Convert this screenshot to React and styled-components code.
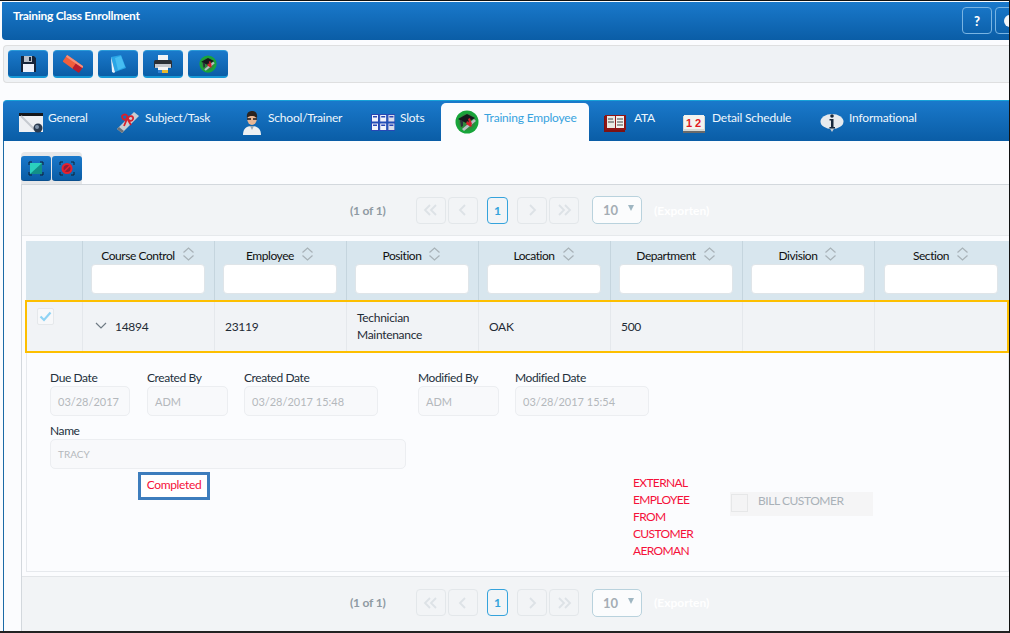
import React from "react";
import styled, { createGlobalStyle } from "styled-components";

const GlobalStyle = createGlobalStyle`
  html, body { margin: 0; padding: 0; background: #fff; }
  * { box-sizing: border-box; }
  body { font-family: Lato, "Liberation Sans", sans-serif; font-size: 12px; color: #222; }
`;

const BLUE = "linear-gradient(#1a79cb, #0a5da6)";

// -------- Page frame --------

const Frame = styled.div`
  width: 1010px;
  height: 633px;
  overflow: hidden;
  padding-top: 1px;
  background: #fbfcfe;
  border-top: 1px solid #111;
  border-right: 1px solid #111;
  border-bottom: 2px solid #222;
  display: flex;
  flex-direction: column;
`;

const Header = styled.div`
  height: 38px;
  flex: none;
  margin-left: 2px;
  padding: 5px 0 0 11px;
  background: ${BLUE};
  border-radius: 0 0 0 4px;
  display: flex;
  justify-content: space-between;
  color: #fff;
`;

const Title = styled.div`
  font-size: 12px;
  font-weight: 700;
  letter-spacing: -0.3px;
  line-height: 18px;
`;

const HeaderTools = styled.div`
  display: flex;
  gap: 3px;
  margin-right: -16px;
`;

const HeaderButton = styled.div`
  width: 30px;
  height: 27px;
  border: 1px solid #79b4e2;
  border-radius: 4px;
  font-size: 13px;
  font-weight: 900;
  display: flex;
  align-items: center;
  justify-content: center;
`;

const HeaderDot = styled.i`
  width: 12px;
  height: 12px;
  border-radius: 50%;
  background: #f4f6f8;
`;

const Toolbar = styled.div`
  height: 38px;
  flex: none;
  margin: 5px 0 0 3px;
  padding: 4px 4px;
  display: flex;
  gap: 5px;
  background: #eff2f5;
  border: 1px solid #dedfe0;
  border-right: none;
  border-radius: 4px 0 0 4px;
`;

const ToolButton = styled.div`
  width: 40px;
  height: 28px;
  background: ${BLUE};
  border-top: 1px solid #2b9bd8;
  border-bottom: 2px solid #1798d6;
  border-radius: 4px;
  display: flex;
  align-items: center;
  justify-content: center;
`;

// -------- Tabs --------

const TabBar = styled.div`
  height: 41px;
  flex: none;
  margin: 17px 0 0 3px;
  background: ${BLUE};
  border-top: 1px solid #17a2d8;
  border-radius: 4px 0 0 0;
  display: flex;
`;

const Tab = styled.div`
  width: ${(p) => p.$width}px;
  height: ${(p) => (p.$active ? 38 : 40)}px;
  margin-top: ${(p) => (p.$active ? 2 : 0)}px;
  padding-left: ${(p) => p.$pad}px;
  display: flex;
  gap: ${(p) => p.$gap}px;
  font-size: 12px;
  letter-spacing: -0.2px;
  color: ${(p) => (p.$active ? "#37a3de" : "#eef6fc")};
  background: ${(p) => (p.$active ? "#fbfcfe" : "transparent")};
  border-radius: ${(p) => (p.$active ? "5px 5px 0 0" : 0)};

  svg { align-self: center; margin-top: ${(p) => (p.$active ? 0 : 3)}px; flex: none; }
  span { margin-top: ${(p) => (p.$active ? 4 : 6)}px; line-height: 22px; white-space: nowrap; }
`;

const TabBody = styled.div`
  flex: 1;
  min-height: 0;
  margin-left: 3px;
  padding: 11px 0 0 17px;
  border-left: 1px solid #1b6aa6;
  display: flex;
  flex-direction: column;
`;

const ActionGroup = styled.div`
  align-self: flex-start;
  height: 32px;
  padding: 4px 0 3px;
  display: flex;
  gap: 1px;
  background: #e6e7e9;
  border-radius: 4px 4px 0 0;
`;

const ActionButton = styled.div`
  width: 30px;
  height: 25px;
  background: ${BLUE};
  border-bottom: 1px solid #0a4f8e;
  border-radius: 3px;
  display: flex;
  align-items: center;
  justify-content: center;
`;

const Panel = styled.div`
  flex: 1;
  min-height: 0;
  display: flex;
  flex-direction: column;
  border-top: 1px solid #d3d8dd;
  border-left: 1px solid #d3d8dd;
`;

// -------- Paginator --------

const Pager = styled.div`
  height: ${(p) => p.$height}px;
  flex: none;
  margin-top: ${(p) => p.$top}px;
  padding: 0 0 ${(p) => (p.$top ? 3 : 0)}px 328px;
  background: #f2f4f6;
  border-top: ${(p) => (p.$top ? "1px solid #e2e5e8" : "none")};
  border-bottom: ${(p) => (p.$top ? "none" : "1px solid #e6e9ec")};
  display: flex;
  align-items: center;
`;

const PageCount = styled.div`
  width: 66px;
  color: #8f9aa3;
  font-weight: 700;
  font-size: 12px;
  letter-spacing: -0.2px;
`;

const PageArrow = styled.div`
  width: 30px;
  height: 27px;
  margin-right: ${(p) => p.$right}px;
  border: 1px solid #e3e7ea;
  border-radius: 4px;
  display: flex;
  align-items: center;
  justify-content: center;
`;

const PageNumber = styled.div`
  width: 21px;
  height: 27px;
  margin: 0 9px;
  border: 1px solid #35a3dc;
  border-radius: 4px;
  color: #35a3dc;
  font-weight: 700;
  display: flex;
  align-items: center;
  justify-content: center;
`;

const PageSize = styled.div`
  width: 50px;
  height: 28px;
  margin-left: 11px;
  padding: 0 7px 0 10px;
  background: #fbfcfd;
  border: 1px solid #b9d2dd;
  border-radius: 5px;
  color: #a4adb4;
  font-weight: 700;
  font-size: 13px;
  display: flex;
  align-items: center;
  justify-content: space-between;
`;

const SizeCaret = styled.i`
  margin-bottom: 4px;
  border-left: 3px solid transparent;
  border-right: 3px solid transparent;
  border-top: 6px solid #9fb6c2;
`;

const Exporter = styled.div`
  margin-left: 12px;
  color: #fff;
  font-weight: 700;
  font-size: 12px;
`;

// -------- Table --------

const TableHead = styled.div`
  height: 59px;
  flex: none;
  margin: 5px 0 0 4px;
  display: grid;
  grid-template-columns: 56px repeat(6, 132px) 134px;
  background: #d8e6ee;
`;

const HeadCell = styled.div`
  padding: 6px 9px 0 8px;
  border-left: ${(p) => (p.$first ? "none" : "1px solid #c5d5de")};
  display: flex;
  flex-direction: column;
  align-items: center;
`;

const HeadLabel = styled.div`
  height: 17px;
  display: flex;
  align-items: center;
  gap: 7px;
  color: #111;
  font-size: 12px;
  letter-spacing: -0.45px;

  svg { margin-top: -3px; }
`;

const FilterInput = styled.div`
  width: 114px;
  height: 30px;
  background: #fff;
  border: 1px solid #dfe5e9;
  border-radius: 4px;
`;

const Row = styled.div`
  height: 53px;
  flex: none;
  margin-left: 3px;
  display: grid;
  grid-template-columns: 55px repeat(6, 132px) 132px;
  background: #f1f3f6;
  border: 2px solid #fdbf00;
  font-size: 12px;
  letter-spacing: -0.3px;
  color: #1f2a35;
`;

const Cell = styled.div`
  padding: 0 ${(p) => (p.$pad ? 0 : 8)}px 1px ${(p) => p.$pad || 10}px;
  border-left: ${(p) => (p.$first ? "none" : "1px solid #e5e8ec")};
  display: flex;
  align-items: center;
  gap: 8px;
  line-height: 17px;
`;

const CheckCell = styled.div`
  padding: 6px 0 0 10px;
`;

const CheckBox = styled.div`
  width: 17px;
  height: 17px;
  background: #f7f8fa;
  border: 1px solid #e5e8eb;
  border-radius: 2px;
  display: flex;
  align-items: center;
  justify-content: center;
`;

// -------- Detail form --------

const Detail = styled.div`
  height: 219px;
  flex: none;
  margin-left: 4px;
  padding: 17px 0 0 23px;
  border: 1px solid #e6e9ed;
  border-top: none;
`;

const FieldRow = styled.div`
  display: flex;
  margin-top: ${(p) => p.$top || 0}px;
`;

const Field = styled.div`
  width: ${(p) => p.$width}px;
  margin-right: ${(p) => p.$right || 0}px;
`;

const FieldLabel = styled.div`
  height: 16px;
  line-height: 15px;
  font-size: 12px;
  letter-spacing: -0.4px;
  color: #23303c;
  white-space: nowrap;
`;

const FieldValue = styled.div`
  height: 30px;
  padding-left: 7px;
  background: #f8f9fb;
  border: 1px solid #eceef1;
  border-radius: 5px;
  color: #b4b8bc;
  font-size: ${(p) => (p.$small ? 10 : 11)}px;
  display: flex;
  align-items: center;
  white-space: nowrap;
`;

const StatusRow = styled.div`
  display: flex;
  align-items: flex-start;
  margin-top: 3px;
`;

const Completed = styled.div`
  width: 72px;
  height: 28px;
  margin-left: 88px;
  padding-bottom: 4px;
  border: 3px solid #3d7dbd;
  background: #fff;
  color: #f5103a;
  font-size: 12px;
  letter-spacing: -0.35px;
  display: flex;
  align-items: center;
  justify-content: center;
`;

const ExternalNote = styled.div`
  width: 70px;
  margin: 2px 0 0 423px;
  color: #f5103a;
  font-size: 12px;
  letter-spacing: -0.65px;
  line-height: 17px;
`;

const BillCustomer = styled.div`
  width: 143px;
  height: 24px;
  margin: 20px 0 0 27px;
  padding: 1px 0 0 1px;
  background: #f5f5f6;
  display: flex;
  gap: 10px;
  color: #a9b1b8;
  font-size: 12px;
  letter-spacing: -0.45px;
`;

const BillBox = styled.div`
  width: 17px;
  height: 18px;
  margin-top: 1px;
  background: #f4f4f5;
  border: 1px solid #e6e7e8;
`;

// -------- Icons --------

const Floppy = () => (
  <svg width="17" height="18" viewBox="0 0 17 18">
    <path d="M1 1h13l2 2v14H1z" fill="#16243a" />
    <rect x="4" y="1" width="8" height="6" fill="#b9bfc9" />
    <rect x="9" y="2" width="2" height="4" fill="#16243a" />
    <path d="M3 9h11v8H3z" fill="#eef1fa" />
  </svg>
);

const Eraser = () => (
  <svg width="20" height="20" viewBox="0 0 20 20">
    <g transform="rotate(35 10 10)">
      <rect x="0" y="6" width="13" height="8" rx="1" fill="#ef5f3c" />
      <rect x="12" y="6" width="8" height="8" rx="1" fill="#b81d2c" />
      <rect x="0" y="6" width="20" height="2" fill="#f68f78" />
    </g>
  </svg>
);

const Notepad = () => (
  <svg width="18" height="20" viewBox="0 0 18 20">
    <path d="M2 3l10-2 5 13-11 4z" fill="#2aa5e6" />
    <path d="M2 3l4 15-1 1-2-1z" fill="#e9f3fb" />
    <path d="M6 4l6-2 4 11-7 3z" fill="#46bdf2" />
  </svg>
);

const Printer = () => (
  <svg width="20" height="20" viewBox="0 0 20 20">
    <rect x="5" y="1" width="10" height="6" fill="#f2f3f5" />
    <rect x="1" y="6" width="18" height="8" rx="1.5" fill="#2a2f36" />
    <rect x="2" y="10" width="16" height="4" fill="#c4c8ce" />
    <rect x="5" y="13" width="10" height="6" fill="#f5f5f5" />
    <rect x="9" y="16" width="6" height="3" fill="#e8b92e" />
    <rect x="5" y="16" width="4" height="3" fill="#2f7fd0" />
  </svg>
);

const TrainingBadge = ({ size = 18 }) => (
  <svg width={size} height={size} viewBox="0 0 24 24">
    <circle cx="12" cy="12" r="11.5" fill="#18a53a" />
    <circle cx="12" cy="12" r="8.5" fill="#2f8a3d" />
    <path d="M3 9l9-5 8 4-9 5z" fill="#15181c" />
    <path d="M5 10l1 7 2-1V11z" fill="#2a2f3a" />
    <path d="M7 19L19 9l2 2L9 21z" fill="#b9bfc4" />
    <path d="M12 11l5 4-1 2-5-3zM15 8l2 6-2 1-2-6z" fill="#d2202c" />
  </svg>
);

const TealSquare = () => (
  <svg width="16" height="15" viewBox="0 0 16 15">
    <rect x="2" y="2" width="12" height="11" fill="#128f88" />
    <path d="M2 2h12L2 13z" fill="#2bd0be" />
    <path d="M1 4V1h3M12 1h3v3M15 11v3h-3M4 14H1v-3" fill="none" stroke="#123" strokeWidth="1" />
  </svg>
);

const NoSign = () => (
  <svg width="16" height="15" viewBox="0 0 16 15">
    <path d="M1 4V1h3M12 1h3v3M15 11v3h-3M4 14H1v-3" fill="none" stroke="#123" strokeWidth="1" />
    <circle cx="8" cy="7.5" r="4.5" fill="#8c1d3a" stroke="#e8202c" strokeWidth="2" />
    <path d="M5 10.5l6-6" stroke="#e8202c" strokeWidth="1.6" />
  </svg>
);

const GeneralIcon = () => (
  <svg width="26" height="22" viewBox="0 0 26 22">
    <rect x="1" y="1" width="24" height="19" fill="#eef0f3" />
    <rect x="1" y="1" width="24" height="3" fill="#15171a" />
    <path d="M3 4l14 14" stroke="#c6cad0" strokeWidth="2" />
    <circle cx="20" cy="16" r="4.5" fill="#2a3a4e" />
    <circle cx="19" cy="15" r="2" fill="#7f93aa" />
  </svg>
);

const DiplomaIcon = () => (
  <svg width="26" height="25" viewBox="0 0 26 25">
    <path d="M2 19L19 2l5 4L7 23z" fill="#c9cdd1" />
    <path d="M2 19l5 4 2-2-5-4z" fill="#6d7278" />
    <path d="M7 6c3-3 6-1 5 2s-5 2-5-2zM13 8c2-3 6-2 5 1s-5 2-5-1zM12 9l-3 7M13 10l3 5" fill="none" stroke="#d8202c" strokeWidth="1.8" />
  </svg>
);

const TeacherIcon = () => (
  <svg width="20" height="24" viewBox="0 0 20 24">
    <path d="M1 24c0-6 3-9 9-9s9 3 9 9z" fill="#eef0f2" />
    <path d="M8 15l2 4 2-4z" fill="#9ba6b0" />
    <ellipse cx="10" cy="8" rx="4.8" ry="6" fill="#e8b795" />
    <path d="M5 7c-1-6 3-7 5-7s6 1 5 7c-2-2-7-3-10 0z" fill="#2b2420" />
    <path d="M5 8h4M11 8h4" stroke="#15181c" strokeWidth="1.5" />
  </svg>
);

const SlotsIcon = () => (
  <svg width="24" height="17" viewBox="0 0 24 17">
    {[0, 1].map((r) =>
      [0, 1, 2].map((c) => (
        <g key={`${r}${c}`}>
          <rect x={c * 8.2 + 0.5} y={r * 8.5 + 0.5} width="7" height="7.5" fill={c === 2 ? "#d9dde8" : "#f0f3fa"} stroke="#2747b5" />
          <rect x={c * 8.2 + 2} y={r * 8.5 + 2} width="4" height="1.5" fill="#2747b5" />
        </g>
      ))
    )}
  </svg>
);

const BookIcon = () => (
  <svg width="23" height="18" viewBox="0 0 23 18">
    <path d="M0 2h2v14h19v2H0z" fill="#7d1212" />
    <rect x="1" y="1" width="21" height="15" fill="#8f1616" />
    <rect x="3" y="2" width="8" height="12" fill="#e9e9e3" />
    <rect x="12" y="2" width="8" height="12" fill="#f2f2ee" />
    <path d="M4 5h5M4 8h6M13 5h6M13 8h6M13 11h6" stroke="#444" />
  </svg>
);

const ScheduleIcon = () => (
  <svg width="24" height="20" viewBox="0 0 24 20">
    <rect x="1" y="3" width="22" height="15" fill="#d9d9d3" />
    <rect x="2" y="2" width="20" height="14" fill="#f3f3ef" />
    <path d="M1 18h22v2H1z" fill="#6a6a6a" />
    <text x="4" y="13.5" fontFamily="Liberation Sans, sans-serif" fontWeight="700" fontSize="11" fill="#e01a20">1</text>
    <text x="13" y="13.5" fontFamily="Liberation Sans, sans-serif" fontWeight="700" fontSize="11" fill="#e01a20">2</text>
  </svg>
);

const InfoIcon = () => (
  <svg width="24" height="19" viewBox="0 0 24 19">
    <ellipse cx="12" cy="8.5" rx="11.5" ry="7.5" fill="#e6eaee" />
    <path d="M9 14l3 5 3-5z" fill="#c5ccd3" />
    <circle cx="12" cy="3" r="1.8" fill="#17283c" />
    <path d="M9.5 6h4v8h1.5v1.5H9.5V14H11V7.5H9.5z" fill="#17283c" />
  </svg>
);

const SortIcon = () => (
  <svg width="13" height="14" viewBox="0 0 13 14">
    <path d="M1.5 5.5l5-4.5 5 4.5M1.5 8.5l5 4.5 5-4.5" fill="none" stroke="#a8b2b8" strokeWidth="1.2" />
  </svg>
);

const Arrow = ({ d }) => (
  <svg width="18" height="14" viewBox="0 0 18 14">
    <path d={d} fill="none" stroke="#dde2e6" strokeWidth="1.8" />
  </svg>
);

const Expand = () => (
  <svg width="12" height="8" viewBox="0 0 12 8">
    <path d="M1 1l5 5 5-5" fill="none" stroke="#6f7a84" strokeWidth="1.2" />
  </svg>
);

const Check = () => (
  <svg width="13" height="11" viewBox="0 0 13 11">
    <path d="M1.5 5.5l3.5 3.5 6.5-7.5" fill="none" stroke="#8fd3f4" strokeWidth="2.2" />
  </svg>
);

// -------- Data --------

const tabs = [
  { label: "General", icon: <GeneralIcon />, width: 97, pad: 15, gap: 4 },
  { label: "Subject/Task", icon: <DiplomaIcon />, width: 127, pad: 15, gap: 4 },
  { label: "School/Trainer", icon: <TeacherIcon />, width: 129, pad: 15, gap: 6 },
  { label: "Slots", icon: <SlotsIcon />, width: 85, pad: 15, gap: 5 },
  { label: "Training Employee", icon: <TrainingBadge size={24} />, width: 148, pad: 14, gap: 5, active: true },
  { label: "ATA", icon: <BookIcon />, width: 78, pad: 15, gap: 7 },
  { label: "Detail Schedule", icon: <ScheduleIcon />, width: 138, pad: 15, gap: 6 },
  { label: "Informational", icon: <InfoIcon />, width: 120, pad: 15, gap: 5 },
];

const columns = ["Course Control", "Employee", "Position", "Location", "Department", "Division", "Section"];

function Paginator({ top, height }) {
  return (
    <Pager $top={top} $height={height}>
      <PageCount>(1 of 1)</PageCount>
      <PageArrow $right={2}><Arrow d="M8 2L3 7l5 5M14 2L9 7l5 5" /></PageArrow>
      <PageArrow $right={0}><Arrow d="M11 2L6 7l5 5" /></PageArrow>
      <PageNumber>1</PageNumber>
      <PageArrow $right={2}><Arrow d="M7 2l5 5-5 5" /></PageArrow>
      <PageArrow $right={2}><Arrow d="M4 2l5 5-5 5M10 2l5 5-5 5" /></PageArrow>
      <PageSize>10<SizeCaret /></PageSize>
      <Exporter>(Exporten)</Exporter>
    </Pager>
  );
}

export default function App() {
  return (
    <Frame>
      <GlobalStyle />
      <Header>
        <Title>Training Class Enrollment</Title>
        <HeaderTools>
          <HeaderButton>?</HeaderButton>
          <HeaderButton><HeaderDot /></HeaderButton>
        </HeaderTools>
      </Header>

      <Toolbar>
        <ToolButton><Floppy /></ToolButton>
        <ToolButton><Eraser /></ToolButton>
        <ToolButton><Notepad /></ToolButton>
        <ToolButton><Printer /></ToolButton>
        <ToolButton><TrainingBadge /></ToolButton>
      </Toolbar>

      <TabBar>
        {tabs.map((t) => (
          <Tab key={t.label} $width={t.width} $pad={t.pad} $gap={t.gap} $active={t.active}>
            {t.icon}
            <span>{t.label}</span>
          </Tab>
        ))}
      </TabBar>

      <TabBody>
        <ActionGroup>
          <ActionButton><TealSquare /></ActionButton>
          <ActionButton><NoSign /></ActionButton>
        </ActionGroup>

        <Panel>
          <Paginator top={0} height={51} />

          <TableHead>
            <HeadCell $first />
            {columns.map((c) => (
              <HeadCell key={c}>
                <HeadLabel>{c}<SortIcon /></HeadLabel>
                <FilterInput />
              </HeadCell>
            ))}
          </TableHead>

          <Row>
            <CheckCell><CheckBox><Check /></CheckBox></CheckCell>
            <Cell $pad={12}><Expand />14894</Cell>
            <Cell>23119</Cell>
            <Cell>Technician<br />Maintenance</Cell>
            <Cell>OAK</Cell>
            <Cell>500</Cell>
            <Cell />
            <Cell />
          </Row>

          <Detail>
            <FieldRow>
              <Field $width={80} $right={17}>
                <FieldLabel>Due Date</FieldLabel>
                <FieldValue>03/28/2017</FieldValue>
              </Field>
              <Field $width={81} $right={16}>
                <FieldLabel>Created By</FieldLabel>
                <FieldValue>ADM</FieldValue>
              </Field>
              <Field $width={134} $right={40}>
                <FieldLabel>Created Date</FieldLabel>
                <FieldValue>03/28/2017 15:48</FieldValue>
              </Field>
              <Field $width={81} $right={16}>
                <FieldLabel>Modified By</FieldLabel>
                <FieldValue>ADM</FieldValue>
              </Field>
              <Field $width={134}>
                <FieldLabel>Modified Date</FieldLabel>
                <FieldValue>03/28/2017 15:54</FieldValue>
              </Field>
            </FieldRow>

            <FieldRow $top={7}>
              <Field $width={356}>
                <FieldLabel>Name</FieldLabel>
                <FieldValue $small>TRACY</FieldValue>
              </Field>
            </FieldRow>

            <StatusRow>
              <Completed>Completed</Completed>
              <ExternalNote>EXTERNAL EMPLOYEE FROM CUSTOMER AEROMAN</ExternalNote>
              <BillCustomer>
                <BillBox />
                BILL CUSTOMER
              </BillCustomer>
            </StatusRow>
          </Detail>

          <Paginator top={4} height={55} />
        </Panel>
      </TabBody>
    </Frame>
  );
}
